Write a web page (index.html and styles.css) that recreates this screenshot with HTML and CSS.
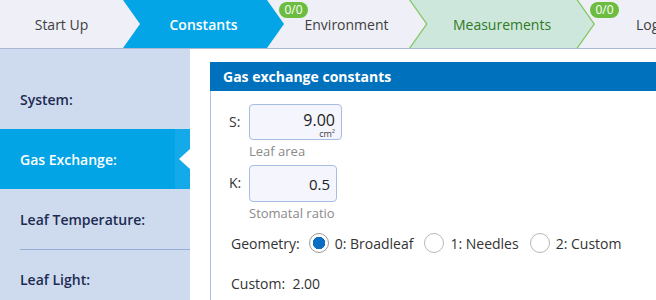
FILE: index.html
```html
<!DOCTYPE html>
<html lang="en">
<head>
  <meta charset="UTF-8" />
  <meta name="viewport" content="width=device-width, initial-scale=1" />
  <title>Constants</title>
  <link rel="stylesheet" href="styles.css">
</head>
<body>
  <header class="steps">
    <div class="step step-start">Start Up</div>
    <div class="step step-active">Constants</div>
    <div class="step step-env"><span class="badge">0/0</span>Environment</div>
    <div class="step step-meas"><span class="meas-fill">Measurements</span></div>
    <div class="step step-log"><span class="badge">0/0</span>Log</div>
  </header>

  <div class="layout">
    <aside class="sidebar">
      <div class="side-item">System:</div>
      <div class="side-item active">Gas Exchange:<span class="side-strip"><span class="notch"></span></span></div>
      <div class="side-item">Leaf Temperature:</div>
      <div class="side-item">Leaf Light:</div>
    </aside>

    <main class="content">
      <section class="card">
        <h2 class="card-title">Gas exchange constants</h2>
        <div class="card-body">
          <div class="field">
            <span class="field-label">S:</span>
            <div class="field-col">
              <div class="input input-s">
                <span class="input-value">9.00</span>
                <span class="input-unit">cm²</span>
              </div>
              <span class="hint">Leaf area</span>
            </div>
          </div>
          <div class="field">
            <span class="field-label">K:</span>
            <div class="field-col">
              <div class="input input-k">
                <span class="input-value">0.5</span>
              </div>
              <span class="hint">Stomatal ratio</span>
            </div>
          </div>

          <div class="radio-row">
            <span class="radio-label">Geometry:</span>
            <label class="radio"><span class="dot checked"></span>0: Broadleaf</label>
            <label class="radio"><span class="dot"></span>1: Needles</label>
            <label class="radio"><span class="dot"></span>2: Custom</label>
          </div>

          <div class="custom-row">Custom:&nbsp; 2.00</div>
        </div>
      </section>
    </main>
  </div>
</body>
</html>
```

FILE: styles.css
```css
body {
  font-family: 'Open Sans', 'Noto Sans', sans-serif;
  margin: 0;
  padding: 0;
  color: #333;
  background: #fff;
  width: 656px;
  height: 300px;
  overflow: hidden;
}

/* step bar */
.steps {
  display: flex;
  height: 48px;
  background: #eeeff7;
  border-bottom: 1px solid #a9b8d2;
  font-size: 14px;
  font-weight: 500;
}
.step {
  display: flex;
  align-items: center;
  justify-content: center;
  height: 48px;
  flex-shrink: 0;
  color: #404040;
  position: relative;
}
.step-start {
  width: 123px;
}
.step-active {
  width: 161px;
  margin-right: -17px;
  background: #03a5e6;
  color: #fff;
  font-weight: 600;
  clip-path: polygon(0 0, calc(100% - 17px) 0, 100% 50%, calc(100% - 17px) 100%, 0 100%, 17px 50%);
}
.step-env {
  width: 159px;
  margin-right: -17px;
}
.step-meas {
  width: 186px;
  margin-right: -17px;
  background: #82c65d;
  clip-path: polygon(0 0, calc(100% - 17px) 0, 100% 50%, calc(100% - 17px) 100%, 0 100%, 17px 50%);
}
.meas-fill {
  display: flex;
  align-items: center;
  justify-content: center;
  width: 100%;
  height: 100%;
  background: #cee7dd;
  color: #2f7a22;
  clip-path: polygon(1.5px 0, calc(100% - 18.5px) 0, calc(100% - 1.5px) 50%, calc(100% - 18.5px) 100%, 1.5px 100%, 18.5px 50%);
}
.step-log {
  flex: 1;
  justify-content: flex-start;
  padding-left: 58px;
}
.badge {
  position: absolute;
  left: 12px;
  top: 2px;
  width: 29px;
  height: 16px;
  border-radius: 8px;
  background: #6cbd3f;
  color: #fff;
  font-size: 12px;
  font-weight: 500;
  line-height: 16px;
  text-align: center;
}

/* page layout */
.layout {
  display: flex;
  height: 251px;
}
.sidebar {
  width: 190px;
  flex-shrink: 0;
  background: #cedbee;
  padding-top: 20px;
}
.side-item {
  display: flex;
  align-items: center;
  height: 60px;
  padding-left: 20px;
  font-size: 14px;
  font-weight: 600;
  color: #1d2b52;
}
.side-item:not(.active) + .side-item:not(.active) {
  background: linear-gradient(#93b1d8, #93b1d8) no-repeat 20px 0 / calc(100% - 20px) 1px;
}
.side-item.active {
  background: #02a4e6;
  color: #fff;
}
.side-strip {
  margin-left: auto;
  width: 15px;
  height: 100%;
  background: #14aaea;
  display: flex;
  align-items: center;
  justify-content: flex-end;
}
.notch {
  width: 0;
  height: 0;
  border-top: 10px solid transparent;
  border-bottom: 10px solid transparent;
  border-right: 11px solid #fff;
}

.content {
  flex: 1;
  padding: 13px 0 0 20px;
  min-width: 0;
}
.card {
  border-left: 1px solid #a9c5e6;
  height: 100%;
}
.card-title {
  margin: 0 0 0 -1px;
  height: 29px;
  line-height: 29px;
  padding-left: 13px;
  background: #0071bc;
  color: #fff;
  font-size: 14px;
  font-weight: 700;
}
.card-body {
  padding: 13px 0 0 18px;
  font-size: 14px;
}

.field {
  display: flex;
  align-items: flex-start;
  margin-bottom: 5px;
}
.field-label {
  width: 20px;
  line-height: 36px;
}
.field-col {
  display: flex;
  flex-direction: column;
}
.input {
  box-sizing: border-box;
  height: 36px;
  background: #f4f5fd;
  border: 1px solid #a8bde2;
  border-radius: 4px;
  padding: 6px 6px 0 0;
  display: flex;
  flex-direction: column;
  align-items: flex-end;
}
.input-s {
  width: 93px;
}
.input-k {
  width: 88px;
  height: 37px;
  justify-content: center;
  padding-top: 0;
}
.input-value {
  font-size: 16px;
  line-height: 18px;
  color: #222;
}
.input-k .input-value {
  font-size: 15px;
}
.input-unit {
  font-size: 9px;
  line-height: 9px;
  color: #444;
}
.hint {
  font-size: 13px;
  color: #8a8a8a;
  line-height: 18px;
  margin-top: 2px;
}

.radio-row {
  display: flex;
  align-items: center;
  margin-top: 9px;
  height: 24px;
  padding-left: 2px;
}
.radio-label {
  margin-right: 9px;
}
.radio {
  display: flex;
  align-items: center;
  margin-right: 11px;
}
.dot {
  box-sizing: border-box;
  width: 20px;
  height: 20px;
  border: 1px solid #b8b8b8;
  border-radius: 50%;
  margin-right: 6px;
  background: #fff;
}
.dot.checked {
  border-color: #999;
  background: radial-gradient(circle, #0a6fc2 0 6px, #fff 6.5px);
}
.custom-row {
  margin-top: 19px;
  padding-left: 2px;
}
```
